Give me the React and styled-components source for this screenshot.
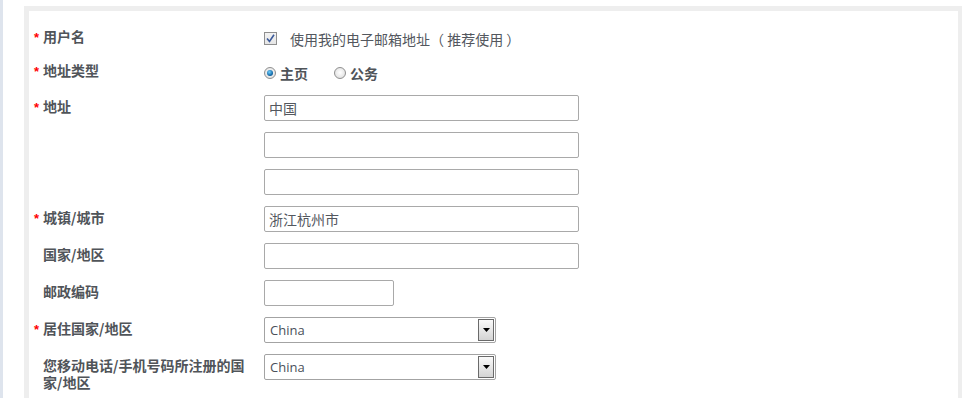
import React from "react";
import styled, { createGlobalStyle } from "styled-components";

const Global = createGlobalStyle`
  html, body { margin: 0; padding: 0; background: #fff; }
  body { font-family: "Noto Sans CJK SC", "Noto Sans", sans-serif; }
  * { box-sizing: border-box; }
`;

const Page = styled.div`
  display: flex;
  height: 398px;
  overflow: hidden;
`;

const Strip = styled.div`
  width: 3px;
  flex: none;
  background: #dee4ed;
`;

const Panel = styled.div`
  flex: 1;
  margin: 6px -1px 0 21px;
  border: 5px solid #eeeeee;
  border-bottom: none;
  background: #fff;
  padding: 16px 0 0 0;
`;

const Row = styled.div`
  display: grid;
  grid-template-columns: 235px 1fr;
  align-items: start;
  margin-bottom: 11px;
  min-height: ${(p) => (p.$short ? 23 : 26)}px;
`;

const Label = styled.div`
  display: flex;
  padding: ${(p) => (p.$short ? 1 : 3)}px 0 0 5px;
  font-size: 14px;
  line-height: 17px;
  font-weight: 700;
  color: #505459;
`;

const Star = styled.span`
  width: 9px;
  flex: none;
  color: #f00;
  font-weight: 700;
  font-family: "Liberation Sans", sans-serif;
  font-size: 13px;
  line-height: 19px;
`;

const LabelText = styled.span`
  max-width: 208px;
`;

const Control = styled.div`
  display: flex;
  align-items: center;
  height: ${(p) => (p.$short ? 23 : 26)}px;
`;

const CheckBox = styled.span`
  width: 13px;
  height: 13px;
  flex: none;
  border: 1px solid #8f8f8f;
  background: linear-gradient(#f2f2f2, #e6e6e6);
  display: flex;
  align-items: center;
  justify-content: center;
`;

const CheckText = styled.span`
  margin-left: 13px;
  font-size: 14px;
  color: #53575e;
  white-space: pre;
`;

const Radio = styled.span`
  width: 12px;
  height: 12px;
  flex: none;
  border-radius: 50%;
  border: 1px solid #8f8f8f;
  background: radial-gradient(circle at 50% 45%, #fff, #d9d9d9);
  display: flex;
  align-items: center;
  justify-content: center;
  margin-left: ${(p) => (p.$first ? 0 : 26)}px;
`;

const Dot = styled.span`
  width: 6px;
  height: 6px;
  border-radius: 50%;
  background: radial-gradient(circle at 40% 35%, #6fd0ff, #0a5d9c 70%);
`;

const RadioText = styled.span`
  margin-left: 4px;
  font-size: 14px;
  font-weight: 700;
  color: #505459;
`;

const TextInput = styled.div`
  width: ${(p) => p.$w}px;
  height: 26px;
  border: 1px solid #a9a9a9;
  border-radius: 2px;
  padding: 0 4px;
  font-size: 14px;
  line-height: 24px;
  color: #53575e;
  background: #fff;
`;

const SelectBox = styled.div`
  width: 232px;
  height: 26px;
  border: 1px solid #a3a3a3;
  border-radius: 2px;
  display: flex;
  align-items: stretch;
  padding: 1px;
  background: #fff;
`;

const SelectValue = styled.span`
  flex: 1;
  padding-left: 4px;
  font-family: "Open Sans", "DejaVu Sans", sans-serif;
  font-size: 13px;
  line-height: 22px;
  color: #4a4f5a;
`;

const ArrowButton = styled.span`
  width: 16px;
  flex: none;
  border: 1px solid #6a6a6a;
  background: linear-gradient(#fafafa, #d4d4d4);
  display: flex;
  align-items: center;
  justify-content: center;
`;

const Field = ({ label, required, short, children }) => (
  <Row $short={short}>
    <Label $short={short}>
      <Star>{required ? "*" : ""}</Star>
      <LabelText>{label}</LabelText>
    </Label>
    <Control $short={short}>{children}</Control>
  </Row>
);

const Select = ({ value }) => (
  <SelectBox>
    <SelectValue>{value}</SelectValue>
    <ArrowButton>
      <svg width="7" height="4" viewBox="0 0 7 4">
        <path d="M0 0h7L3.5 4z" fill="#000" />
      </svg>
    </ArrowButton>
  </SelectBox>
);

export default function App() {
  return (
    <Page>
      <Global />
      <Strip />
      <Panel>
        <Field label="用户名" required short>
          <CheckBox>
            <svg width="9" height="9" viewBox="0 0 9 9">
              <path d="M1 4.5 L3.5 7.5 L8 0.8" stroke="#3b5a9a" strokeWidth="1.6" fill="none" />
            </svg>
          </CheckBox>
          <CheckText>使用我的电子邮箱地址（ 推荐使用 ）</CheckText>
        </Field>
        <Field label="地址类型" required short>
          <Radio $first>
            <Dot />
          </Radio>
          <RadioText>主页</RadioText>
          <Radio />
          <RadioText>公务</RadioText>
        </Field>
        <Field label="地址" required>
          <TextInput $w={315}>中国</TextInput>
        </Field>
        <Field label="">
          <TextInput $w={315} />
        </Field>
        <Field label="">
          <TextInput $w={315} />
        </Field>
        <Field label="城镇/城市" required>
          <TextInput $w={315}>浙江杭州市</TextInput>
        </Field>
        <Field label="国家/地区">
          <TextInput $w={315} />
        </Field>
        <Field label="邮政编码">
          <TextInput $w={130} />
        </Field>
        <Field label="居住国家/地区" required>
          <Select value="China" />
        </Field>
        <Field label="您移动电话/手机号码所注册的国家/地区">
          <Select value="China" />
        </Field>
      </Panel>
    </Page>
  );
}
